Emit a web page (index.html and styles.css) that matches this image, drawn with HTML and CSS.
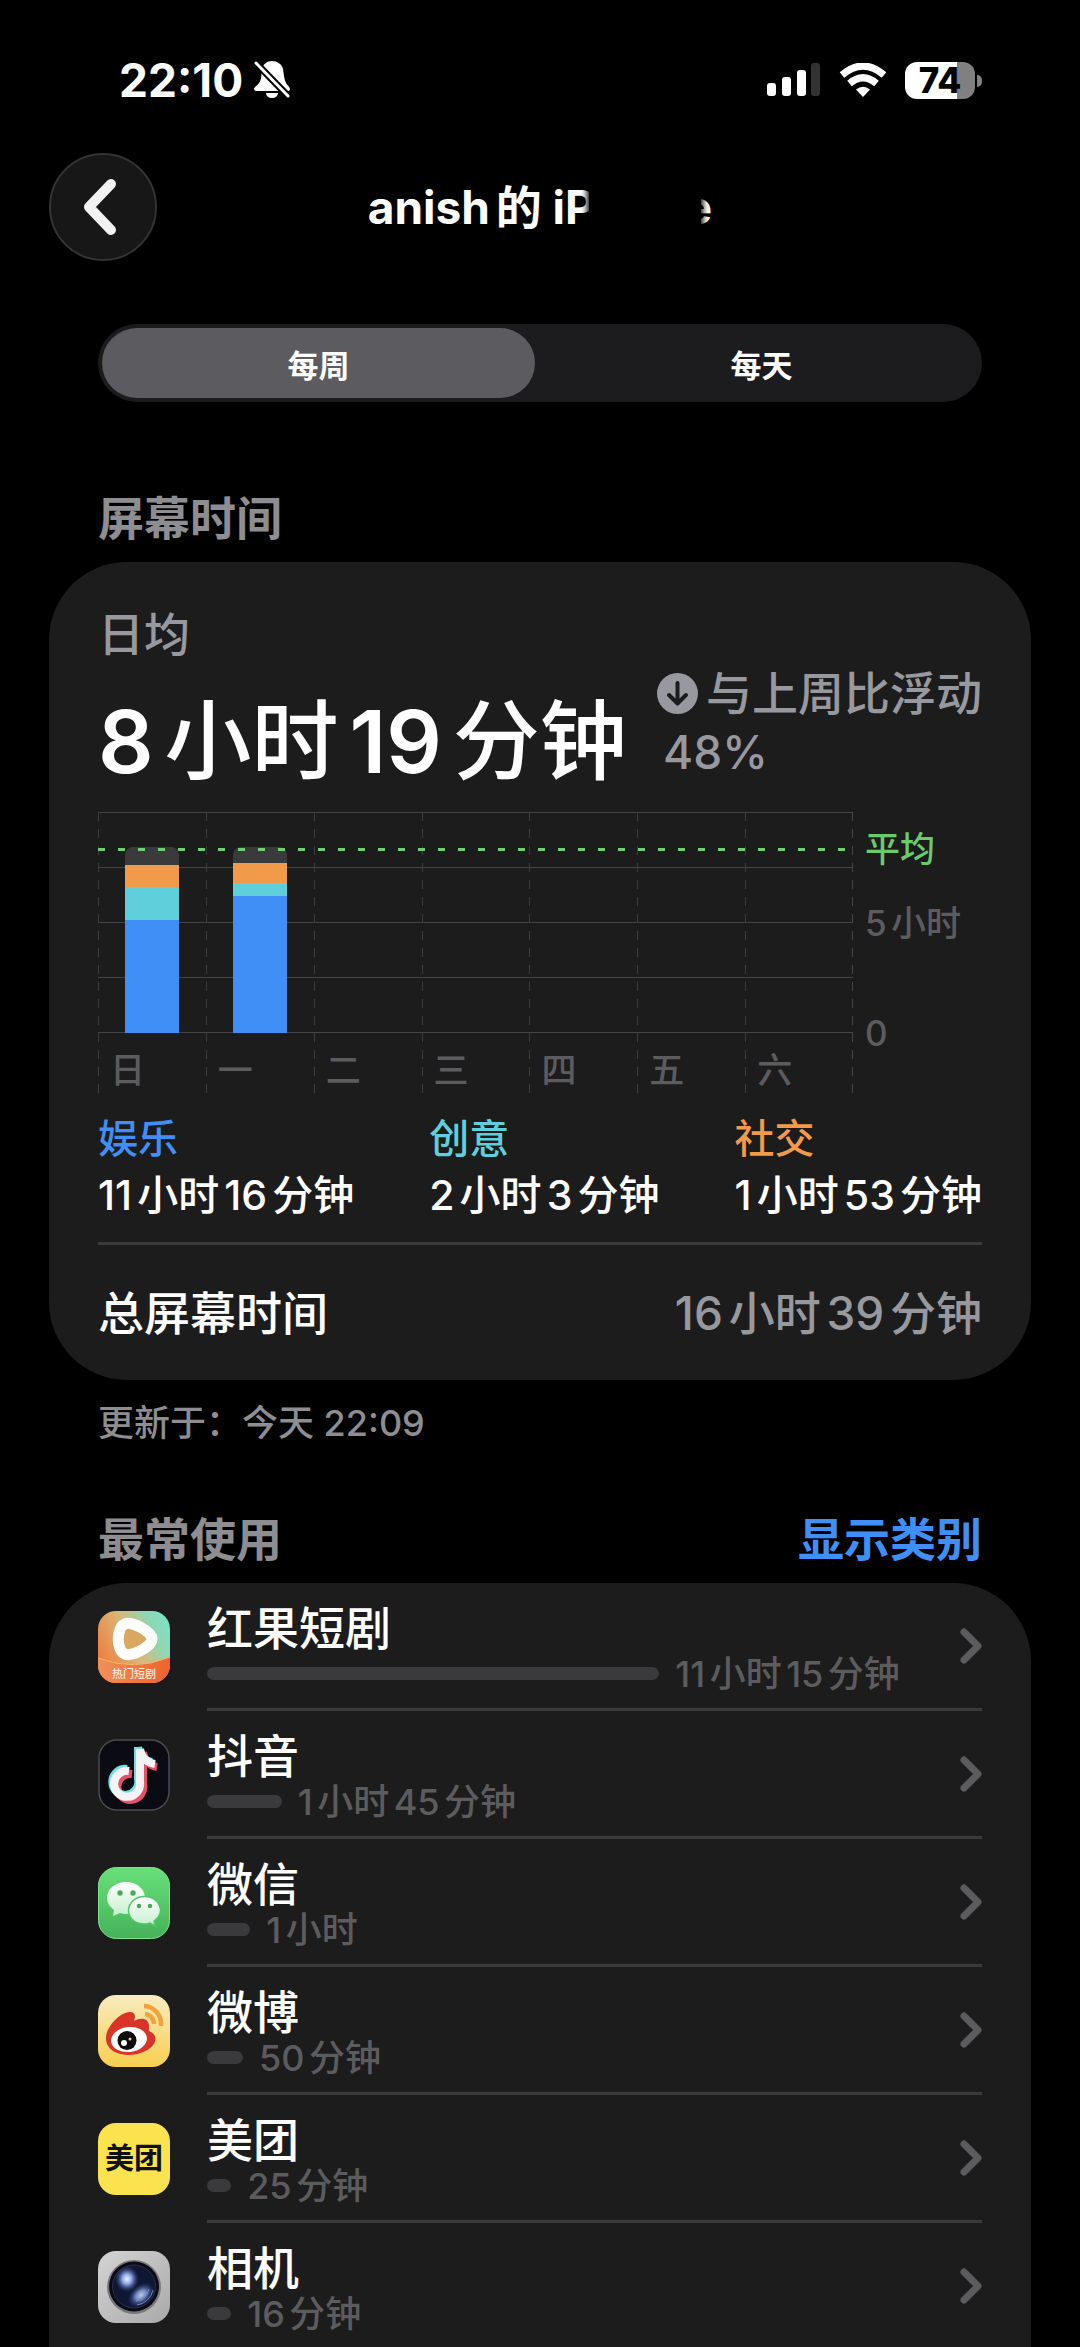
FILE: index.html
```html
<!DOCTYPE html>
<html lang="zh-CN">
<head>
    <meta charset="UTF-8">
    <meta name="viewport" content="width=device-width, initial-scale=1.0">
    <title>屏幕时间</title>
    <link rel="stylesheet" href="styles.css">
</head>
<body>
    <div class="status-bar">
        <div class="status-left">
            <span class="clock">22:10</span>
            <svg class="bell" viewBox="0 0 36 38" fill="#fff">
                <path d="M18 0c-5 0-9 3-10 8-1 6 0 10-3 14-2 3-5 4-5 6 0 1 1 2 2 2h32c1 0 2-1 2-2 0-2-3-4-4-6-2-4-2-8-3-14C28 3 23 0 18 0z"/>
                <path d="M12 32h12c0 3-3 5-6 5s-6-2-6-5z"/>
                <path d="M0 0L36 37" stroke="#000" stroke-width="7"/>
                <path d="M2 2L34 35" stroke="#fff" stroke-width="3" stroke-linecap="round"/>
            </svg>
        </div>
        <div class="status-right">
            <svg width="54" height="34" viewBox="0 0 54 34" fill="#fff">
                <rect x="0" y="20" width="9" height="13" rx="3"/>
                <rect x="15" y="14" width="9" height="19" rx="3"/>
                <rect x="30" y="7" width="9" height="26" rx="3"/>
                <rect x="44" y="0" width="9" height="33" rx="3" fill="#333"/>
            </svg>
            <svg width="48" height="34" viewBox="0 0 48 34" fill="none" stroke="#fff" stroke-width="7">
                <path d="M3 12Q24 -6 45 12"/>
                <path d="M10.500 20.500Q24 9 37.500 20.500"/>
                <path d="M17 26.500Q24 21 31 26.500L24 34z" fill="#fff" stroke="none"/>
            </svg>
            <div class="battery"><span class="battery-level">74</span></div>
        </div>
    </div>

    <header class="nav">
        <button class="back" aria-label="返回">
            <svg width="36" height="58" viewBox="0 0 36 58" fill="none" stroke="#f2f2f2" stroke-width="10" stroke-linecap="round" stroke-linejoin="round">
                <path d="M29 6L7 29L29 52"/>
            </svg>
        </button>
        <h1 class="title">anish的 iP<span class="smudge"></span>e</h1>
    </header>

    <div class="tabs" role="tablist">
        <button class="tab active" role="tab" aria-selected="true">每周</button>
        <button class="tab" role="tab" aria-selected="false">每天</button>
    </div>

    <div class="section-head">
        <h2>屏幕时间</h2>
    </div>

    <section class="card usage">
        <p class="label">日均</p>
        <div class="summary">
            <p class="average"><b>8</b>小时<b>19</b>分钟</p>
            <p class="change">
                <span class="change-text">
                    <svg width="41" height="41" viewBox="0 0 41 41">
                        <circle cx="20.500" cy="20.500" r="20.500" fill="#98989f"/>
                        <path d="M20.500 10V30M12 22L20.500 30.500L29 22" fill="none" stroke="#1c1c1e" stroke-width="4" stroke-linecap="round" stroke-linejoin="round"/>
                    </svg>
                    与上周比浮动
                </span>
                <span class="change-value">48%</span>
            </p>
        </div>

        <div class="chart">
            <div class="plot">
                <div class="day">
                    <div class="bars">
                        <div class="seg other" style="height: 8%"></div>
                        <div class="seg social" style="height: 10%"></div>
                        <div class="seg creative" style="height: 15%"></div>
                        <div class="seg fun" style="height: 51%"></div>
                    </div>
                    <span>日</span>
                </div>
                <div class="day">
                    <div class="bars">
                        <div class="seg other" style="height: 7%"></div>
                        <div class="seg social" style="height: 9%"></div>
                        <div class="seg creative" style="height: 6%"></div>
                        <div class="seg fun" style="height: 62%"></div>
                    </div>
                    <span>一</span>
                </div>
                <div class="day"><div class="bars"></div><span>二</span></div>
                <div class="day"><div class="bars"></div><span>三</span></div>
                <div class="day"><div class="bars"></div><span>四</span></div>
                <div class="day"><div class="bars"></div><span>五</span></div>
                <div class="day"><div class="bars"></div><span>六</span></div>
                <div class="average-line"></div>
            </div>
            <div class="axis">
                <span class="axis-average">平均</span>
                <span>5小时</span>
                <span class="axis-zero">0</span>
            </div>
        </div>

        <div class="legend">
            <div><p class="legend-name blue">娱乐</p><p>11小时16分钟</p></div>
            <div><p class="legend-name cyan">创意</p><p>2小时3分钟</p></div>
            <div><p class="legend-name orange">社交</p><p>1小时53分钟</p></div>
        </div>

        <div class="total">
            <span>总屏幕时间</span>
            <span class="total-value">16小时39分钟</span>
        </div>
    </section>

    <p class="updated">更新于：今天 22:09</p>

    <div class="section-head">
        <h2>最常使用</h2>
        <button class="show-categories">显示类别</button>
    </div>

    <section class="card apps">
        <a class="app" href="#">
            <svg class="icon" viewBox="0 0 72 72">
                <defs>
                    <linearGradient id="hg" x1="0" y1="0.700" x2="1" y2="0.200">
                        <stop offset="0" stop-color="#f07a3c"/>
                        <stop offset="0.500" stop-color="#d9b878"/>
                        <stop offset="0.800" stop-color="#8ed8b4"/>
                        <stop offset="1" stop-color="#7fe0c4"/>
                    </linearGradient>
                    <linearGradient id="hg2" x1="0" y1="0" x2="1" y2="0">
                        <stop offset="0" stop-color="#f09058"/>
                        <stop offset="1" stop-color="#f0622c"/>
                    </linearGradient>
                    <clipPath id="tile"><rect width="72" height="72" rx="18"/></clipPath>
                </defs>
                <g clip-path="url(#tile)">
                    <rect width="72" height="72" fill="url(#hg)"/>
                    <path d="M0 47Q36 61 72 46V72H0z" fill="url(#hg2)"/>
                    <path d="M0 47Q36 61 72 46" fill="none" stroke="#f8b468" stroke-width="1"/>
                    <path d="M27 13C33 10 54 20 54 28C54 36 33 46 27 43C18 40 18 16 27 13z" fill="#d8a860" stroke="#fff" stroke-width="11" stroke-linejoin="round"/>
                    <text x="36" y="67" text-anchor="middle" font-size="11" fill="#ffe9dc">热门短剧</text>
                </g>
            </svg>
            <div class="app-body">
                <div class="app-info">
                    <p class="app-name">红果短剧</p>
                    <div class="app-time"><span class="bar" style="width: 61.7%"></span>11小时15分钟</div>
                </div>
                <svg class="chevron" viewBox="0 0 22 36"><path d="M4 4L18 18L4 32"/></svg>
            </div>
        </a>
        <a class="app" href="#">
            <svg class="icon" viewBox="0 0 72 72">
                <rect x="1" y="1" width="70" height="70" rx="18" fill="#0b0b14" stroke="#4a4a50" stroke-width="1.500"/>
                <g fill="none" stroke-width="8">
                    <path d="M43 11V43A13 13 0 1 1 32 33M43 11Q45 24 57 26" stroke="#e8506a" transform="translate(2 2)"/>
                    <path d="M43 11V43A13 13 0 1 1 32 33M43 11Q45 24 57 26" stroke="#6ee0e4" transform="translate(-3 -3)"/>
                    <path d="M42 10V43A13 13 0 1 1 31 32M42 10Q44 23 57 25" stroke="#f4f4f6"/>
                </g>
            </svg>
            <div class="app-body">
                <div class="app-info">
                    <p class="app-name">抖音</p>
                    <div class="app-time"><span class="bar" style="width: 10.2%"></span>1小时45分钟</div>
                </div>
                <svg class="chevron" viewBox="0 0 22 36"><path d="M4 4L18 18L4 32"/></svg>
            </div>
        </a>
        <a class="app" href="#">
            <svg class="icon" viewBox="0 0 72 72">
                <defs>
                    <linearGradient id="wx" x1="0" y1="0" x2="0" y2="1">
                        <stop offset="0" stop-color="#68e07a"/>
                        <stop offset="1" stop-color="#46b25a"/>
                    </linearGradient>
                    <linearGradient id="bubble" x1="0" y1="0" x2="0" y2="1">
                        <stop offset="0" stop-color="#fff"/>
                        <stop offset="1" stop-color="#c4f0cc"/>
                    </linearGradient>
                </defs>
                <rect x="0.500" y="0.500" width="71" height="71" rx="18" fill="url(#wx)" stroke="#7be48c"/>
                <path d="M28 15C17 15 9 22 9 31C9 36 12 40 16 43L15 49L22 46Q25 47 28 47C39 47 47 40 47 31S39 15 28 15z" fill="url(#bubble)"/>
                <path d="M46.500 29.500C37 29.500 30.500 36 30.500 43.500S37 57 46.500 57Q50 57 52 56L57 59L56 54C60 51 62.500 48 62.500 43.500C62.500 36 56 29.500 46.500 29.500z" fill="url(#bubble)" stroke="#56c66a" stroke-width="1.500"/>
                <g fill="#4aa85a">
                    <circle cx="22" cy="26" r="2.700"/><circle cx="35" cy="26" r="2.700"/>
                    <circle cx="41" cy="39" r="2.200"/><circle cx="52" cy="39" r="2.200"/>
                </g>
            </svg>
            <div class="app-body">
                <div class="app-info">
                    <p class="app-name">微信</p>
                    <div class="app-time"><span class="bar" style="width: 5.9%"></span>1小时</div>
                </div>
                <svg class="chevron" viewBox="0 0 22 36"><path d="M4 4L18 18L4 32"/></svg>
            </div>
        </a>
        <a class="app" href="#">
            <svg class="icon" viewBox="0 0 72 72">
                <defs>
                    <linearGradient id="wb" x1="0" y1="0" x2="0" y2="1">
                        <stop offset="0" stop-color="#f8ecc0"/>
                        <stop offset="1" stop-color="#f8cf4e"/>
                    </linearGradient>
                </defs>
                <rect width="72" height="72" rx="18" fill="url(#wb)"/>
                <path d="M8 43C8 32 22 17 32 17C37 17 38 21 36 26C43 22 52 23 51 33C51 35 50 36 53 37C64 43 54 59 32 60C18 60 8 54 8 43z" fill="#da3328"/>
                <ellipse cx="31" cy="44.500" rx="18" ry="12.500" fill="#fff" transform="rotate(-7 31 44.500)"/>
                <circle cx="29" cy="45.500" r="9.500" fill="#0a0a0a"/>
                <circle cx="26" cy="48" r="3" fill="#fff"/><circle cx="32" cy="44" r="1.500" fill="#e8c8a0"/>
                <path d="M46 11A18 18 0 0 1 63 31M47 19A10 10 0 0 1 56 29" fill="none" stroke="#f2a23c" stroke-width="4.500"/>
            </svg>
            <div class="app-body">
                <div class="app-info">
                    <p class="app-name">微博</p>
                    <div class="app-time"><span class="bar" style="width: 4.9%"></span>50分钟</div>
                </div>
                <svg class="chevron" viewBox="0 0 22 36"><path d="M4 4L18 18L4 32"/></svg>
            </div>
        </a>
        <a class="app" href="#">
            <svg class="icon" viewBox="0 0 72 72">
                <rect width="72" height="72" rx="18" fill="#fbe34f"/>
                <text x="36" y="46" text-anchor="middle" font-size="29" font-weight="700" fill="#111">美团</text>
            </svg>
            <div class="app-body">
                <div class="app-info">
                    <p class="app-name">美团</p>
                    <div class="app-time"><span class="bar" style="width: 3.3%"></span>25分钟</div>
                </div>
                <svg class="chevron" viewBox="0 0 22 36"><path d="M4 4L18 18L4 32"/></svg>
            </div>
        </a>
        <a class="app" href="#">
            <svg class="icon" viewBox="0 0 72 72">
                <defs>
                    <linearGradient id="cam" x1="0" y1="0" x2="1" y2="1">
                        <stop offset="0" stop-color="#d4d4d4"/>
                        <stop offset="1" stop-color="#a9a9a9"/>
                    </linearGradient>
                    <radialGradient id="glow">
                        <stop offset="0" stop-color="#f0f4ff"/>
                        <stop offset="0.400" stop-color="#8aa6ea"/>
                        <stop offset="1" stop-color="#2a4484" stop-opacity="0"/>
                    </radialGradient>
                </defs>
                <rect width="72" height="72" rx="18" fill="url(#cam)"/>
                <circle cx="36" cy="36" r="27" fill="#77777c"/>
                <circle cx="36" cy="35.500" r="25" fill="#0a0b14"/>
                <circle cx="36" cy="35.500" r="21.500" fill="#101734" stroke="#2a2f48"/>
                <ellipse cx="29" cy="28" rx="12" ry="13" fill="url(#glow)"/>
                <ellipse cx="43" cy="44" rx="15" ry="10" fill="url(#glow)" transform="rotate(-40 43 44)" opacity="0.800"/>
                <path d="M55 39A19 19 0 0 1 39 54M51 38A15 15 0 0 1 38 50" fill="none" stroke="#7488c4" stroke-width="1"/>
            </svg>
            <div class="app-body">
                <div class="app-info">
                    <p class="app-name">相机</p>
                    <div class="app-time"><span class="bar" style="width: 3.3%"></span>16分钟</div>
                </div>
                <svg class="chevron" viewBox="0 0 22 36"><path d="M4 4L18 18L4 32"/></svg>
            </div>
        </a>
    </section>
</body>
</html>
```

FILE: styles.css
```css
* {
    margin: 0;
    padding: 0;
    box-sizing: border-box;
}
body {
    font-family: Inter, "Noto Sans CJK SC", sans-serif;
    font-weight: 500;
    text-autospace: normal;
    background: #000;
    color: #fff;
    display: flex;
    flex-direction: column;
    height: 100vh;
    overflow: hidden;
    padding: 0 49px;
}
button {
    font: inherit;
    color: inherit;
    background: none;
    border: none;
    cursor: pointer;
}
svg {
    display: block;
    flex: none;
}

/* status bar */
.status-bar {
    display: flex;
    justify-content: space-between;
    align-items: center;
    height: 52px;
    margin-top: 54px;
    padding: 0 49px 0 70px;
    flex: none;
}
.status-left, .status-right {
    display: flex;
    align-items: center;
}
.status-left {
    gap: 11px;
}
.status-right {
    gap: 18px;
}
.clock {
    font-size: 46px;
    font-weight: 700;
    line-height: 52px;
}
.bell {
    width: 36px;
    height: 38px;
}
.battery {
    position: relative;
    width: 70px;
    height: 37px;
    border-radius: 12px;
    background: linear-gradient(90deg, #fff 74%, #808080 74%);
    margin-right: 7px;
}
.battery::after {
    content: "";
    position: absolute;
    left: 72px;
    top: 13px;
    width: 5px;
    height: 12px;
    border-radius: 0 6px 6px 0;
    background: #808080;
}
.battery-level {
    display: block;
    text-align: center;
    color: #000;
    font-size: 35px;
    font-weight: 800;
    line-height: 37px;
}

/* title row */
.nav {
    display: grid;
    grid-template-columns: 108px 1fr 108px;
    align-items: center;
    height: 108px;
    margin-top: 47px;
    flex: none;
}
.back {
    display: flex;
    align-items: center;
    justify-content: center;
    width: 108px;
    height: 108px;
    padding-right: 6px;
    border-radius: 50%;
    background: #171717;
    border: 2px solid #333;
}
.title {
    display: flex;
    justify-content: center;
    white-space: pre;
    font-size: 46px;
    font-weight: 700;
    line-height: 60px;
}
.smudge {
    position: relative;
    width: 112px;
    margin: 0 -16px 0 -6px;
    background: #000;
    box-shadow: 0 0 6px 2px #000;
}

/* week / day switch */
.tabs {
    display: flex;
    gap: 10px;
    height: 78px;
    margin: 63px 49px 0;
    padding: 4px;
    border-radius: 39px;
    background: #1c1c1e;
    flex: none;
}
.tab {
    flex: 1;
    border-radius: 35px;
    font-size: 31px;
    font-weight: 600;
}
.tab.active {
    background: #5b5b60;
}

.section-head {
    display: flex;
    justify-content: space-between;
    align-items: center;
    height: 60px;
    margin: 86px 49px 14px;
    flex: none;
}
h2, .show-categories {
    font-size: 46px;
    font-weight: 600;
    line-height: 60px;
}
h2 {
    color: #8d8d92;
}
.show-categories {
    color: #3f8ff7;
}
.card {
    background: #1c1c1d;
    border-radius: 78px;
}

/* usage card */
.usage {
    padding: 42px 49px 0;
    flex: none;
}
.label {
    font-size: 46px;
    line-height: 60px;
    color: #98989f;
}
.summary {
    display: flex;
    justify-content: space-between;
    align-items: flex-end;
    white-space: nowrap;
}
.average {
    font-size: 87px;
    line-height: 99px;
    padding-top: 24px;
}
.average b {
    font-weight: 600;
}
.change {
    font-size: 46px;
    line-height: 59px;
    color: #98989f;
    padding-bottom: 9px;
}
.change-text {
    display: flex;
    align-items: center;
    gap: 8px;
}
.change-value {
    display: block;
    padding-left: 6px;
}

/* chart */
.chart {
    display: flex;
    margin-top: 21px;
    font-size: 35px;
    color: #5c5c5f;
}
.plot {
    position: relative;
    flex: 1;
    display: flex;
    background:
        repeating-linear-gradient(#444446 0 1px, transparent 1px 55px) 0 0 / 100% 221px no-repeat,
        repeating-linear-gradient(#444446 0 9px, transparent 9px 17px) 100% 0 / 1px 100% no-repeat;
}
.day {
    flex: 1;
    background: repeating-linear-gradient(#3c3c3e 0 9px, transparent 9px 17px) 0 0 / 1px 100% no-repeat;
}
.day span {
    display: block;
    padding-left: 12px;
    line-height: 74px;
    height: 64px;
}
.bars {
    display: flex;
    flex-direction: column;
    justify-content: flex-end;
    align-items: center;
    height: 221px;
}
.seg {
    width: 50%;
}
.other {
    background: #3a3a3c;
    border-radius: 8px 8px 0 0;
}
.social {
    background: #f09a4a;
}
.creative {
    background: #5fcfdc;
}
.fun {
    background: #3f8ff7;
}
.average-line {
    position: absolute;
    left: 0;
    right: 0;
    top: 36px;
    height: 3px;
    background: repeating-linear-gradient(90deg, #73cf74 0 7px, transparent 7px 20px);
}
.axis {
    display: flex;
    flex-direction: column;
    width: 129px;
    padding-left: 12px;
    line-height: 74px;
    white-space: nowrap;
}
.axis-average {
    color: #6bcb6b;
}
.axis-zero {
    margin-top: 36px;
    height: 64px;
}

.legend {
    display: flex;
    justify-content: space-between;
    padding: 14px 0 19px;
    font-size: 41px;
    line-height: 56px;
    border-bottom: 3px solid #3a3a3c;
}
.legend-name {
    font-size: 40px;
}
.blue {
    color: #3f8ff7;
}
.cyan {
    color: #5fcfdc;
}
.orange {
    color: #f09a4a;
}
.total {
    display: flex;
    justify-content: space-between;
    align-items: center;
    height: 135px;
    padding-bottom: 6px;
    font-size: 46px;
}
.total-value {
    color: #98989f;
}
.updated {
    margin: 17px 49px 0;
    font-size: 36px;
    line-height: 52px;
    color: #8d8d92;
}
.updated + .section-head {
    margin-top: 60px;
}

/* app list */
.apps {
    flex: 1 0 auto;
    border-radius: 78px 78px 0 0;
    padding: 0 49px;
}
.app {
    display: flex;
    align-items: center;
    gap: 37px;
    height: 128px;
    color: inherit;
    text-decoration: none;
}
.icon {
    width: 72px;
    height: 72px;
}
.app-body {
    flex: 1;
    display: flex;
    align-items: center;
    gap: 20px;
    height: 128px;
    border-bottom: 3px solid #3a3a3c;
}
.app-info {
    flex: 1;
    padding-top: 2px;
}
.app-name {
    font-size: 46px;
    line-height: 54px;
}
.app-time {
    display: flex;
    align-items: center;
    gap: 16px;
    font-size: 36px;
    line-height: 38px;
    color: #5c5c5f;
}
.bar {
    height: 13px;
    border-radius: 7px;
    background: #3a3a3c;
}
.chevron {
    width: 22px;
    height: 36px;
    fill: none;
    stroke: #5c5c5f;
    stroke-width: 7;
    stroke-linecap: round;
    stroke-linejoin: round;
}
```
